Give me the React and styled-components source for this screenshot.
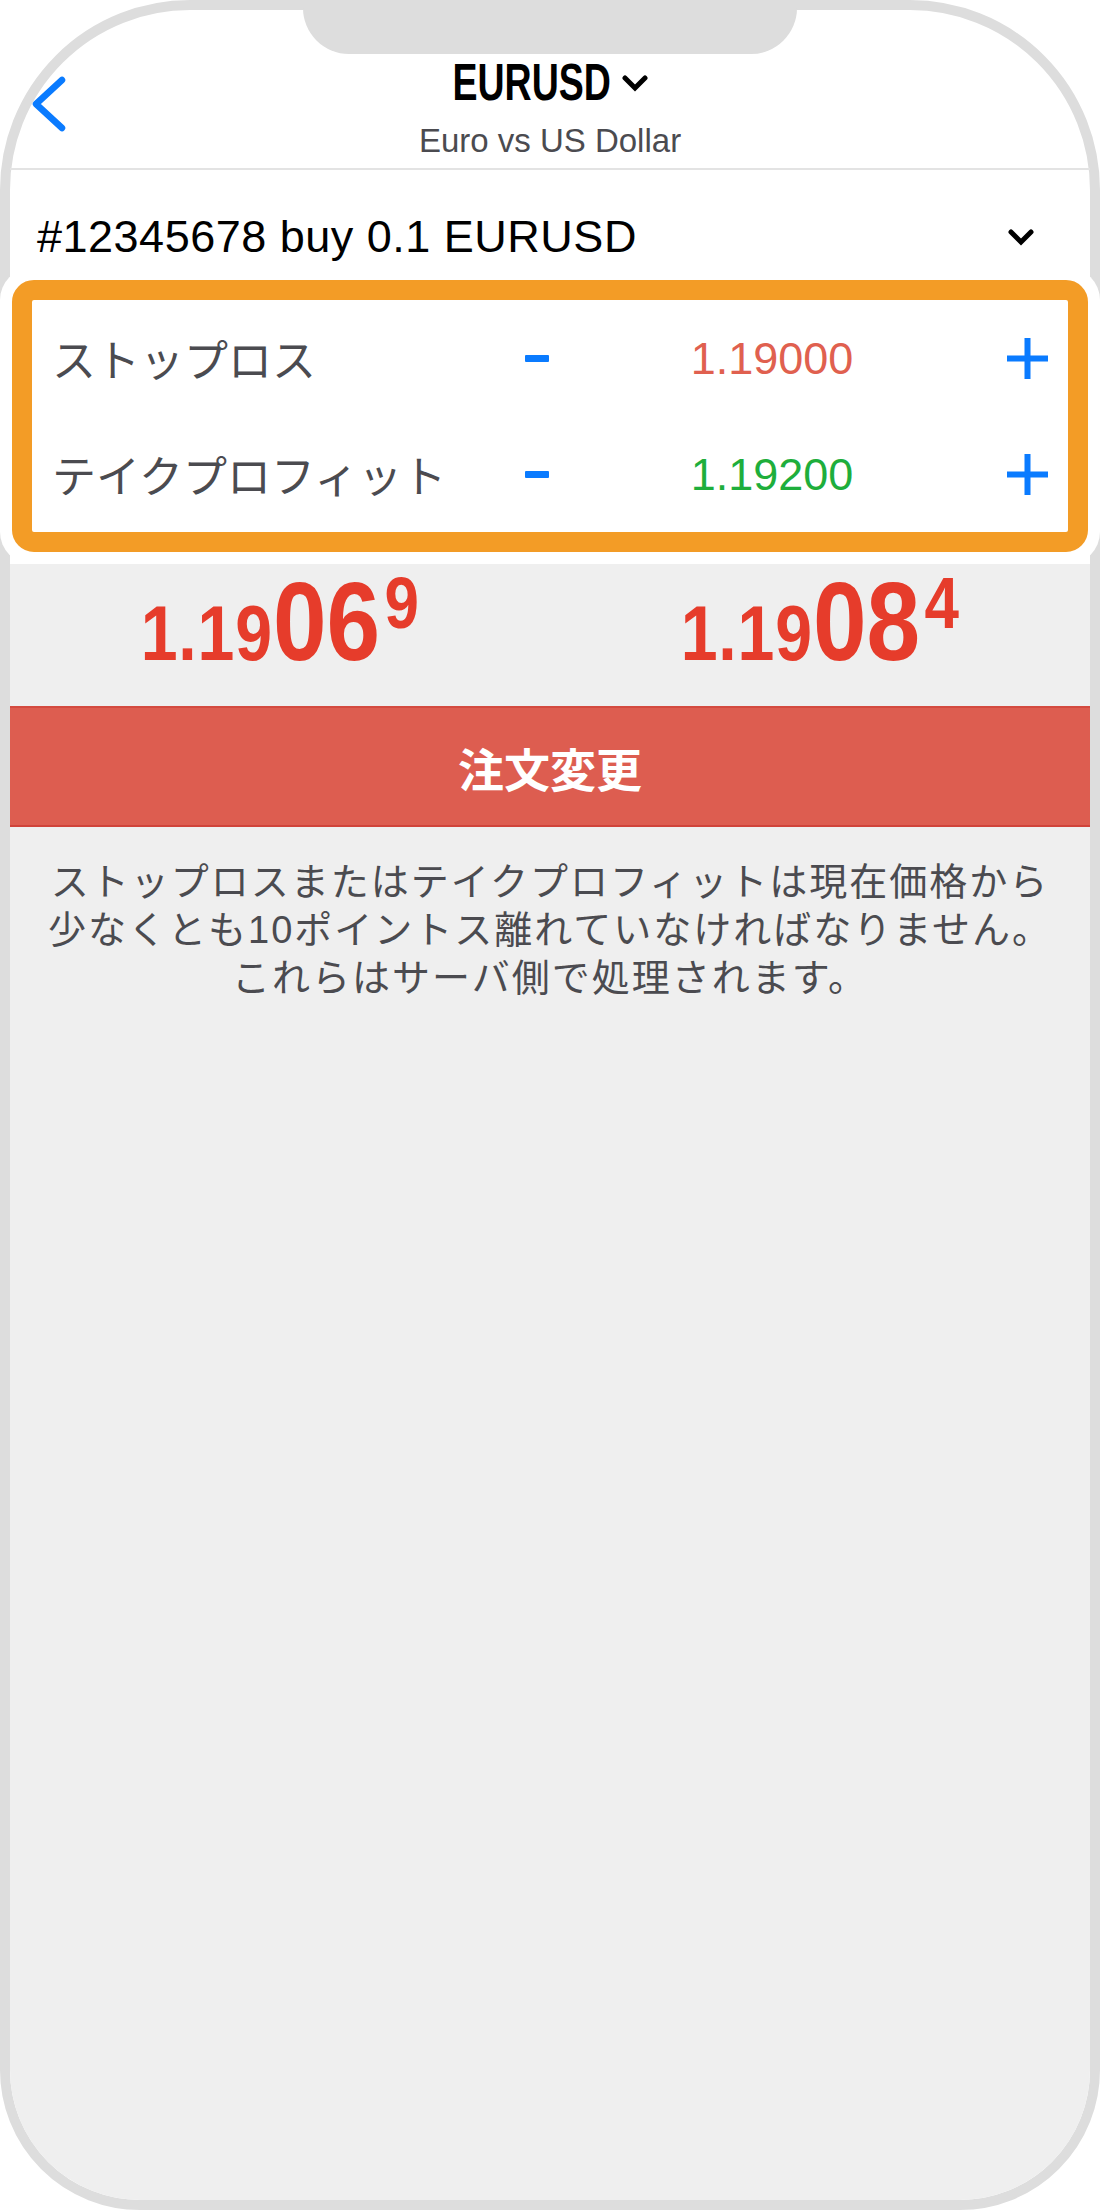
import React from 'react';
import styled, { createGlobalStyle } from 'styled-components';

const FRAME = '#dddddd';
const BLUE = '#0a7bff';
const ORANGE = '#f39c26';
const PRICE_RED = '#e63c2b';
const SL_RED = '#e0604f';
const TP_GREEN = '#1eae3c';
const TEXT_GRAY = '#4b4b50';
const SCREEN_GRAY = '#efefef';
const BUTTON_RED = '#dd5d50';

const SANS = `"Liberation Sans", "Noto Sans CJK JP", sans-serif`;
const JP = `"Noto Sans CJK JP", "Liberation Sans", sans-serif`;

const GlobalStyle = createGlobalStyle`
  body {
    margin: 0;
    background: #fff;
  }
`;

const Phone = styled.div`
  position: relative;
  width: 1100px;
  height: 2210px;
  box-sizing: border-box;
  border: 10px solid ${FRAME};
  border-radius: 190px 190px 140px 140px;
  background: #fff;
  display: flex;
  flex-direction: column;
  font-family: ${SANS};
`;

const Notch = styled.div`
  position: absolute;
  top: -10px;
  left: 293px;
  width: 494px;
  height: 54px;
  background: ${FRAME};
  border-radius: 0 0 46px 46px;
  z-index: 2;
`;

const NavBar = styled.div`
  display: grid;
  grid-template-columns: 1fr auto 1fr;
  align-items: center;
  padding: 48px 0 11px;
  border-bottom: 2px solid #e3e3e3;
`;

const BackButton = styled.div`
  justify-self: start;
  display: flex;
  margin: -7px 0 0 22px;
`;

const TitleBlock = styled.div`
  display: flex;
  flex-direction: column;
  align-items: center;
  gap: 16px;
`;

const TitleLine = styled.div`
  display: flex;
  align-items: center;
  gap: 11px;
`;

// condensed bold face: no narrow family installed, so squeeze Liberation Sans
const Title = styled.div`
  display: inline-block;
  font-weight: 700;
  font-size: 51px;
  line-height: 50px;
  color: #000;
  transform: scaleX(0.735);
  margin: 0 -28px;
`;

const Subtitle = styled.div`
  font-size: 33px;
  line-height: 33px;
  color: ${TEXT_GRAY};
`;

const OrderRow = styled.div`
  display: flex;
  align-items: center;
  justify-content: space-between;
  padding: 45px 56px 9px 27px;
`;

const OrderText = styled.div`
  font-size: 45px;
  line-height: 44px;
  letter-spacing: 0.5px;
  color: #000;
`;

const HighlightCard = styled.div`
  position: relative;
  z-index: 1;
  margin: 0 -10px;
  padding: 12px;
  background: #fff;
  border-radius: 32px;
`;

const HighlightBox = styled.div`
  border: 20px solid ${ORANGE};
  border-radius: 22px;
  background: #fff;
`;

const LevelRow = styled.div`
  display: grid;
  grid-template-columns: 1fr 60px 410px 71px;
  align-items: center;
  height: 116px;
  padding: 0 20px;
`;

const Label = styled.div`
  font-family: ${JP};
  font-size: 44px;
  line-height: 1;
  color: ${TEXT_GRAY};
`;

const MinusBar = styled.div`
  justify-self: center;
  width: 24px;
  height: 7px;
  border-radius: 1px;
  background: ${BLUE};
`;

const Value = styled.div`
  text-align: center;
  font-size: 45px;
  line-height: 1;
  color: ${(p) => p.$color};
`;

const PlusButton = styled.div`
  justify-self: end;
  display: flex;
`;

const Screen = styled.div`
  flex: 1;
  display: flex;
  flex-direction: column;
  background: ${SCREEN_GRAY};
  border-radius: 0 0 130px 130px;
`;

const PriceRow = styled.div`
  display: grid;
  grid-template-columns: 1fr 1fr;
  height: 142px;
  box-sizing: border-box;
  padding-top: 2px;
`;

const Price = styled.div`
  text-align: center;
  color: ${PRICE_RED};
  font-weight: 700;
  font-size: 112px;
  line-height: 1;
`;

const PriceFigure = styled.span`
  display: inline-block;
  transform: scaleX(0.86);
`;

const PriceSmall = styled.span`
  font-size: 77px;
  letter-spacing: 1px;
`;

const PriceSup = styled.span`
  font-size: 72px;
  vertical-align: 32px;
  margin-left: 5px;
`;

const ModifyButton = styled.div`
  height: 121px;
  box-sizing: border-box;
  display: flex;
  align-items: center;
  justify-content: center;
  background: ${BUTTON_RED};
  border-top: 2px solid #d44b40;
  border-bottom: 2px solid #d0433a;
  color: #fff;
  font-family: ${JP};
  font-weight: 700;
  font-size: 46px;
`;

const Notice = styled.div`
  padding: 31px 30px 0;
  text-align: center;
  font-size: 38px;
  line-height: 48px;
  letter-spacing: 2px;
  color: ${TEXT_GRAY};
`;

const Chevron = () => (
  <svg width="26" height="17" viewBox="0 0 26 17" fill="none">
    <polyline points="3,3 13,13 23,3" stroke="#000" strokeWidth="5" strokeLinecap="round" strokeLinejoin="miter" />
  </svg>
);

const BackIcon = () => (
  <svg width="34" height="56" viewBox="0 0 34 56" fill="none">
    <polyline points="30,4 4,28 30,52" stroke={BLUE} strokeWidth="6.5" strokeLinecap="round" strokeLinejoin="round" />
  </svg>
);

const PlusIcon = () => (
  <svg width="41" height="41" viewBox="0 0 41 41">
    <rect x="17.5" y="0" width="6" height="41" fill={BLUE} />
    <rect x="0" y="17.5" width="41" height="6" fill={BLUE} />
  </svg>
);

const levels = [
  { label: 'ストップロス', value: '1.19000', color: SL_RED },
  { label: 'テイクプロフィット', value: '1.19200', color: TP_GREEN },
];

const prices = [
  { small: '1.19', big: '06', sup: '9' },
  { small: '1.19', big: '08', sup: '4' },
];

export default function App() {
  return (
    <>
      <GlobalStyle />
      <Phone>
        <Notch />
        <NavBar>
          <BackButton>
            <BackIcon />
          </BackButton>
          <TitleBlock>
            <TitleLine>
              <Title>EURUSD</Title>
              <Chevron />
            </TitleLine>
            <Subtitle>Euro vs US Dollar</Subtitle>
          </TitleBlock>
          <div />
        </NavBar>
        <OrderRow>
          <OrderText>#12345678 buy 0.1 EURUSD</OrderText>
          <Chevron />
        </OrderRow>
        <HighlightCard>
          <HighlightBox>
            {levels.map((l) => (
              <LevelRow key={l.label}>
                <Label>{l.label}</Label>
                <MinusBar />
                <Value $color={l.color}>{l.value}</Value>
                <PlusButton>
                  <PlusIcon />
                </PlusButton>
              </LevelRow>
            ))}
          </HighlightBox>
        </HighlightCard>
        <Screen>
          <PriceRow>
            {prices.map((p, i) => (
              <Price key={i}>
                <PriceFigure>
                  <PriceSmall>{p.small}</PriceSmall>
                  {p.big}
                  <PriceSup>{p.sup}</PriceSup>
                </PriceFigure>
              </Price>
            ))}
          </PriceRow>
          <ModifyButton>注文変更</ModifyButton>
          <Notice>
            ストップロスまたはテイクプロフィットは現在価格から
            <br />
            少なくとも10ポイントス離れていなければなりません。
            <br />
            これらはサーバ側で処理されます。
          </Notice>
        </Screen>
      </Phone>
    </>
  );
}
